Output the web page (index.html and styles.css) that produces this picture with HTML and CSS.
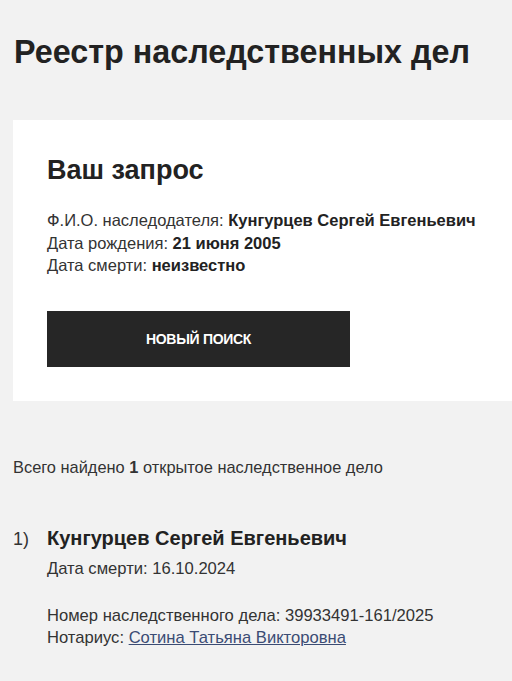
FILE: index.html
```html
<!DOCTYPE html>
<html lang="ru">
<head>
  <meta charset="UTF-8" />
  <meta name="viewport" content="width=device-width, initial-scale=1.0"/>
  <title>Реестр наследственных дел</title>
  <link rel="stylesheet" href="styles.css">
</head>
<body>

  <h1 class="page-title">Реестр наследственных дел</h1>

  <div class="request-card">
    <h2>Ваш запрос</h2>
    <div class="request-info">
      <p>Ф.И.О. наследодателя: <b>Кунгурцев Сергей Евгеньевич</b></p>
      <p>Дата рождения: <b>21 июня 2005</b></p>
      <p>Дата смерти: <b>неизвестно</b></p>
    </div>
    <button class="new-search">НОВЫЙ ПОИСК</button>
  </div>

  <p class="total">Всего найдено <b>1</b> открытое наследственное дело</p>

  <ol class="cases">
    <li class="case">
      <span class="case-num">1)</span>
      <div class="case-body">
        <h3>Кунгурцев Сергей Евгеньевич</h3>
        <p>Дата смерти: 16.10.2024</p>
        <div class="case-details">
          <p>Номер наследственного дела: 39933491-161/2025</p>
          <p>Нотариус: <a href="#">Сотина Татьяна Викторовна</a></p>
        </div>
      </div>
    </li>
  </ol>

</body>
</html>
```

FILE: styles.css
```css
* {
  margin: 0;
  padding: 0;
  box-sizing: border-box;
  font-family: 'Liberation Sans', Arial, sans-serif;
}

body {
  background-color: #f2f2f2;
  color: #222;
  width: 512px;
  overflow: hidden;
}

.page-title {
  font-size: 32.3px;
  font-weight: bold;
  line-height: 38px;
  padding: 33px 14px 0;
  color: #222;
}

.request-card {
  background-color: #fff;
  margin: 49px 0 0 13px;
  height: 281px;
  padding: 34px 34px 0;
}

.request-card h2 {
  font-size: 27px;
  font-weight: bold;
  line-height: 32px;
  color: #222;
}

.request-info {
  margin-top: 23px;
  font-size: 16.5px;
  line-height: 22.5px;
  color: #333;
}

.request-info b {
  color: #222;
}

.new-search {
  display: block;
  margin-top: 34px;
  width: 303px;
  height: 56px;
  border: none;
  background-color: #262626;
  color: #fff;
  font-size: 14px;
  font-weight: bold;
  letter-spacing: -0.3px;
  cursor: pointer;
}

.total {
  font-size: 16.4px;
  line-height: 20px;
  padding: 56px 13px 0;
  color: #333;
}

.cases {
  list-style: none;
  padding: 50px 13px 0;
}

.case {
  display: flex;
}

.case-num {
  width: 34px;
  font-size: 18px;
  line-height: 24px;
  color: #333;
}

.case-body h3 {
  font-size: 20px;
  line-height: 22px;
  font-weight: bold;
  color: #222;
}

.case-body p {
  font-size: 16.6px;
  line-height: 22.5px;
  color: #333;
}

.case-body > p {
  margin-top: 9px;
}

.case-details {
  margin-top: 24px;
}

.case-details a {
  color: #3b4c74;
  text-decoration: underline;
}
```
